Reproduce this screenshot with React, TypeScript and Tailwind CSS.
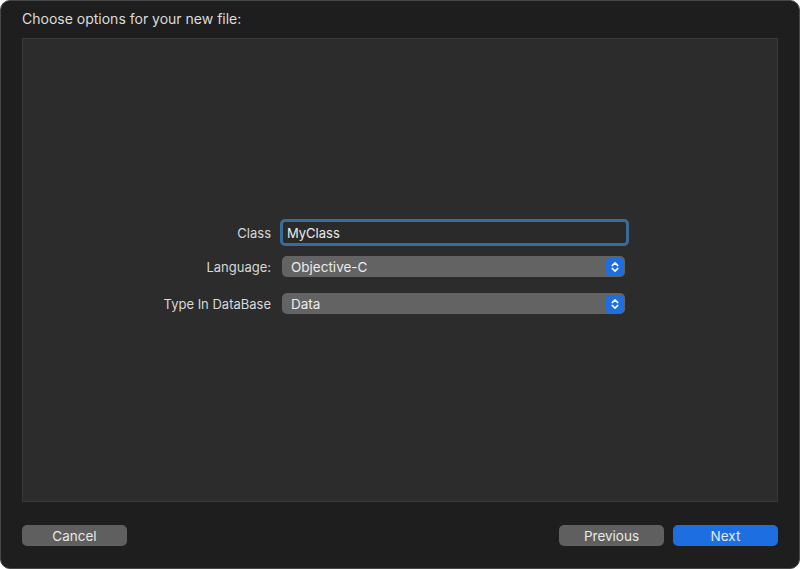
import React from "react";

const font = { fontFamily: "Inter, 'Noto Sans', sans-serif" };

const Stepper = () => (
  <div className="w-[18px] h-[18px] rounded-[4px] bg-[#1d6fe0] flex items-center justify-center">
    <svg width="10" height="12" viewBox="0 0 10 12" fill="none">
      <path d="M2.2 4.6 L5 1.9 L7.8 4.6" stroke="white" strokeWidth="1.5" strokeLinecap="round" strokeLinejoin="round" />
      <path d="M2.2 7.4 L5 10.1 L7.8 7.4" stroke="white" strokeWidth="1.5" strokeLinecap="round" strokeLinejoin="round" />
    </svg>
  </div>
);

const PopUp = ({ value }: { value: string }) => (
  <div className="ml-[11px] w-[343px] h-[21px] rounded-[5px] bg-[#636363] flex items-center justify-between pl-[9px] pr-px">
    <span className="text-[13.5px] leading-4 text-[#ececec]">{value}</span>
    <Stepper />
  </div>
);

const Label = ({ children }: { children: React.ReactNode }) => (
  <div className="w-[248px] text-right text-[13px] leading-4 text-[#d8d8d8]">{children}</div>
);

const Button = ({ label, primary }: { label: string; primary?: boolean }) => (
  <button
    className={`w-[105px] h-[21px] rounded-[5px] text-[13.5px] leading-4 text-[#e8e8e8] ${
      primary ? "bg-[#1d6fe0]" : "bg-[#5f5f5f]"
    }`}
  >
    {label}
  </button>
);

export default function App() {
  return (
    <div style={font} className="w-[800px] h-[569px] bg-[#1e1e1e] rounded-[10px] border border-[#474747] flex flex-col overflow-hidden">
      <div className="pt-[10px] pl-[21px] text-[14px] leading-4 text-[#dcdcdc]">Choose options for your new file:</div>

      <div className="mt-[11px] ml-[21px] w-[756px] h-[464px] bg-[#2c2c2c] border border-[#3a3a3a] flex flex-col pt-[180px]">
        <div className="flex items-center">
          <Label>Class</Label>
          <div className="ml-[9px] w-[349px] h-[27px] border-[3px] border-[#3b6c98] rounded-[5px] bg-[#2a2a2a] flex items-center pl-[4px]">
            <span className="text-[13px] leading-4 text-[#ececec]">MyClass</span>
          </div>
        </div>

        <div className="flex items-center mt-[10px]">
          <Label>Language:</Label>
          <PopUp value="Objective-C" />
        </div>

        <div className="flex items-center mt-[16px]">
          <Label>Type In DataBase</Label>
          <PopUp value="Data" />
        </div>
      </div>

      <div className="mt-[23px] px-[21px] flex items-center">
        <Button label="Cancel" />
        <div className="flex-1" />
        <div className="flex gap-[9px]">
          <Button label="Previous" />
          <Button label="Next" primary />
        </div>
      </div>
    </div>
  );
}
